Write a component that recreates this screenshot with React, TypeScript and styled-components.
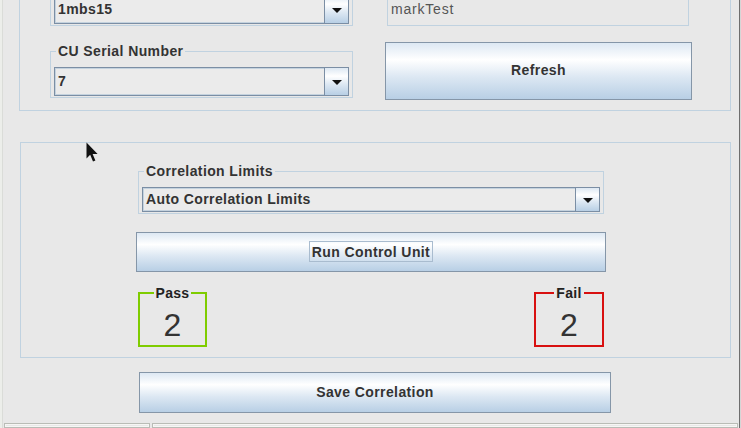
import React from "react";
import styled, { createGlobalStyle } from "styled-components";

const GlobalStyle = createGlobalStyle`
  html, body {
    margin: 0;
    padding: 0;
    background: #e8e8e8;
  }
  body {
    font-family: "Liberation Sans", Arial, sans-serif;
  }
`;

const metalGradient =
  "linear-gradient(to bottom, #dde8f3 0%, #ffffff 30%, #dde8f3 60%, #b8cfe5 100%)";

const App = () => {
  return (
    <>
      <GlobalStyle />
      <Frame>
        <SideStrip />
        <Content>
          <Body>
            <TopPanel>
              <LeftCol>
                <Group>
                  <Title />
                  <Combo $h={29}>
                    <ComboValue>1mbs15</ComboValue>
                    <ComboArrow>
                      <Triangle />
                    </ComboArrow>
                  </Combo>
                </Group>
                <Group>
                  <Title>CU Serial Number</Title>
                  <Combo $h={29}>
                    <ComboValue>7</ComboValue>
                    <ComboArrow>
                      <Triangle />
                    </ComboArrow>
                  </Combo>
                </Group>
              </LeftCol>
              <RightCol>
                <TextGroup>
                  <Title />
                  <FieldText>markTest</FieldText>
                </TextGroup>
                <Button $w={307} $h={58}>
                  Refresh
                </Button>
              </RightCol>
            </TopPanel>

            <BottomPanel>
              <Column>
                <Group>
                  <Title>Correlation Limits</Title>
                  <Combo $h={25}>
                    <ComboValue>Auto Correlation Limits</ComboValue>
                    <ComboArrow>
                      <Triangle />
                    </ComboArrow>
                  </Combo>
                </Group>
                <RunButton $w={470} $h={40}>
                  <Focus>Run Control Unit</Focus>
                </RunButton>
                <ScoreRow>
                  <ScoreBox $color="#7fcc00" $w={69}>
                    <ScoreTitle>Pass</ScoreTitle>
                    <ScoreValue>2</ScoreValue>
                  </ScoreBox>
                  <ScoreBox $color="#d81010" $w={70}>
                    <ScoreTitle>Fail</ScoreTitle>
                    <ScoreValue>2</ScoreValue>
                  </ScoreBox>
                </ScoreRow>
              </Column>
            </BottomPanel>

            <SaveButton $w={472} $h={41}>
              Save Correlation
            </SaveButton>
          </Body>
          <StatusBar>
            <StatusBox $w={146} />
            <StatusBox />
          </StatusBar>
        </Content>
        <EdgeLine />
        <Cursor width="13" height="21" viewBox="0 0 13 21">
          <path
            d="M0.5 0.5 L0.5 16.5 L4.2 12.8 L7 19.5 L9.4 18.4 L6.6 11.9 L11.6 11.9 Z"
            fill="#111"
          />
        </Cursor>
      </Frame>
    </>
  );
};

export default App;

const Frame = styled.div`
  position: relative;
  width: 741px;
  height: 428px;
  overflow: hidden;
  display: flex;
  background: #e8e8e8;
  color: #333;
  font-family: "Liberation Sans", Arial, sans-serif;
`;
const SideStrip = styled.div`
  flex: none;
  width: 3px;
  background-color: #eceeea;
  box-shadow: inset -1px 0 0 #dadcd8;
`;
const Content = styled.div`
  flex: 1;
  min-width: 0;
  display: flex;
  flex-direction: column;
`;
const EdgeLine = styled.div`
  flex: none;
  width: 1px;
  border-left: 1px solid #6e6e6e;
  background: #d6d6d6;
`;
const Body = styled.div`
  display: flex;
  flex-direction: column;
  padding: 0 8px 0 16px;
`;
const TopPanel = styled.div`
  margin-top: -41px;
  display: grid;
  grid-template-columns: 303px 307px;
  column-gap: 32px;
  align-items: start;
  padding: 11px 38px 10px 30px;
  border: 1px solid #c0d2e0;
`;
const LeftCol = styled.div`
  display: flex;
  flex-direction: column;
  gap: 17px;
  padding-bottom: 2px;
`;
const RightCol = styled.div`
  display: flex;
  flex-direction: column;
  gap: 16px;
`;
const Group = styled.fieldset`
  margin: 0;
  min-width: 0;
  padding: 8px 3px 1px;
  border: 1px solid #c0d2e0;
`;
const TextGroup = styled(Group)`
  margin: 0 3px 0 2px;
`;
const Title = styled.legend`
  min-height: 16px;
  margin-left: 2px;
  padding: 0 2px;
  font: bold 14px/16px "Liberation Sans", Arial, sans-serif;
  letter-spacing: 0.4px;
  color: #333;
`;
const Combo = styled.div<{ $h: number }>`
  display: flex;
  height: ${(p) => p.$h}px;
  box-sizing: border-box;
  border: 1px solid #7b8ea4;
  box-shadow: inset 0 0 0 1px #c4d2de;
  background: #ebebeb;
`;
const ComboValue = styled.div`
  flex: 1;
  display: flex;
  align-items: center;
  padding: 0 0 2px 3px;
  font: bold 14px "Liberation Sans", Arial, sans-serif;
  letter-spacing: 0.4px;
  color: #333;
`;
const ComboArrow = styled.div`
  flex: none;
  width: 23px;
  display: flex;
  align-items: center;
  justify-content: center;
  border-left: 1px solid #7b8ea4;
  background: ${metalGradient};
`;
const Triangle = styled.div`
  width: 0;
  height: 0;
  border-left: 5px solid transparent;
  border-right: 5px solid transparent;
  border-top: 5px solid #111;
  margin-top: 1px;
`;
const FieldText = styled.div`
  height: 29px;
  display: flex;
  align-items: center;
  padding-bottom: 2px;
  box-sizing: border-box;
  font: 14px "Liberation Sans", Arial, sans-serif;
  letter-spacing: 0.8px;
  color: #555;
`;
const Button = styled.button<{ $w: number; $h: number }>`
  width: ${(p) => p.$w}px;
  height: ${(p) => p.$h}px;
  box-sizing: border-box;
  margin: 0;
  padding: 0 0 2px;
  display: flex;
  align-items: center;
  justify-content: center;
  border: 1px solid #8596a8;
  border-radius: 0;
  background: ${metalGradient};
  font: bold 14px "Liberation Sans", Arial, sans-serif;
  letter-spacing: 0.4px;
  color: #333;
`;
const RunButton = styled(Button)`
  margin-top: 18px;
`;
const SaveButton = styled(Button)`
  margin: 14px 0 0 120px;
`;
const Focus = styled.span`
  padding: 2px 2px 1px;
  border: 1px solid #a9bccf;
`;
const BottomPanel = styled.div`
  margin: 31px 0 0 1px;
  padding: 20px 0 10px 115px;
  border: 1px solid #c0d2e0;
`;
const Column = styled.div`
  width: 470px;
  display: flex;
  flex-direction: column;
  & > fieldset {
    margin: 0 2px;
  }
`;
const ScoreRow = styled.div`
  margin: 14px 2px 0;
  display: flex;
  justify-content: space-between;
`;
const ScoreBox = styled.fieldset<{ $color: string; $w: number }>`
  margin: 0;
  width: ${(p) => p.$w}px;
  box-sizing: border-box;
  padding: 7px 0 2px;
  border: 2px solid ${(p) => p.$color};
  text-align: center;
`;
const ScoreTitle = styled.legend`
  margin: 0 auto;
  padding: 0 2px;
  font: bold 14px/14px "Liberation Sans", Arial, sans-serif;
  letter-spacing: 0.3px;
  color: #222;
`;
const ScoreValue = styled.div`
  font: 32px/36px "Liberation Sans", Arial, sans-serif;
  color: #333;
`;
const StatusBar = styled.div`
  margin-top: 10px;
  display: flex;
  gap: 2px;
  padding: 0 1px;
  height: 22px;
`;
const StatusBox = styled.div<{ $w?: number }>`
  ${(p) => (p.$w ? `width: ${p.$w}px; flex: none;` : "flex: 1;")}
  box-sizing: border-box;
  border: 1px solid #b9bcb6;
  box-shadow: inset 0 0 0 1px #f6f6f4;
`;
const Cursor = styled.svg`
  position: absolute;
  left: 86px;
  top: 142px;
`;
